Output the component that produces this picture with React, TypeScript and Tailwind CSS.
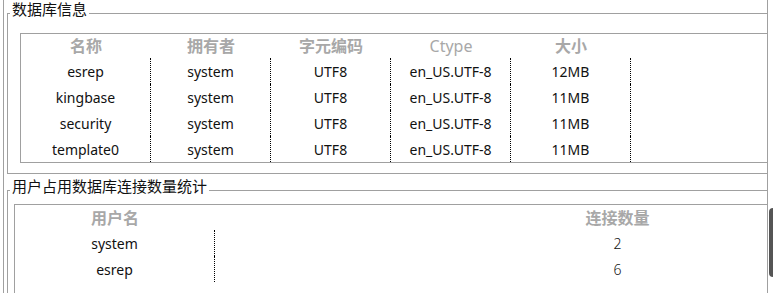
const font = { fontFamily: '"Noto Sans", "Noto Sans CJK SC", sans-serif' };

const DBS = [
  { name: "esrep", owner: "system", enc: "UTF8", ctype: "en_US.UTF-8", size: "12MB" },
  { name: "kingbase", owner: "system", enc: "UTF8", ctype: "en_US.UTF-8", size: "11MB" },
  { name: "security", owner: "system", enc: "UTF8", ctype: "en_US.UTF-8", size: "11MB" },
  { name: "template0", owner: "system", enc: "UTF8", ctype: "en_US.UTF-8", size: "11MB" },
];

const CONNS = [
  { user: "system", count: 2 },
  { user: "esrep", count: 6 },
];

const DB_COLS = [
  { key: "name", label: "名称", w: "w-[130px]", weight: "font-bold" },
  { key: "owner", label: "拥有者", w: "w-[120px]", weight: "font-bold" },
  { key: "enc", label: "字元编码", w: "w-[120px]", weight: "font-bold" },
  { key: "ctype", label: "Ctype", w: "w-[120px]", weight: "font-normal" },
  { key: "size", label: "大小", w: "w-[120px]", weight: "font-bold" },
] as const;

function Group({
  title,
  className,
  children,
}: {
  title: string;
  className: string;
  children: React.ReactNode;
}) {
  return (
    <div className={"relative ml-[3px] w-[820px] border border-[#a0a0a0] " + className}>
      <span className="absolute -top-[15px] left-[2px] bg-white px-[2px] text-[15px] leading-[20px] text-[#111]">
        {title}
      </span>
      {children}
    </div>
  );
}

export default function App() {
  return (
    <div className="relative w-[773px] h-[293px] bg-white overflow-hidden" style={font}>
      <div className="ml-[3px] w-[765px] h-full border-l border-r border-[#a0a0a0] overflow-hidden">
        <Group title="数据库信息" className="mt-[13px] h-[161px]">
          <div className="ml-[12px] mt-[19px] border border-[#a0a0a0]">
            <div className="flex h-[24px] items-center">
              {DB_COLS.map(c => (
                <div
                  key={c.key}
                  className={c.w + " " + c.weight + " shrink-0 text-center text-[16px] text-[#a8a8a8]"}
                >
                  {c.label}
                </div>
              ))}
            </div>
            {DBS.map(row => (
              <div key={row.name} className="flex h-[26px]">
                {DB_COLS.map(c => (
                  <div
                    key={c.key}
                    className={
                      c.w +
                      " shrink-0 flex items-center justify-center border-r border-dotted border-black text-[14px] text-[#111]"
                    }
                  >
                    {row[c.key]}
                  </div>
                ))}
              </div>
            ))}
          </div>
        </Group>

        <Group title="用户占用数据库连接数量统计" className="mt-[16px] h-[140px]">
          <div className="ml-[6px] mt-[13px] h-[200px] border border-[#a0a0a0]">
            <div className="flex h-[25px] items-center text-[16px] font-bold text-[#a8a8a8]">
              <div className="w-[200px] shrink-0 text-center">用户名</div>
              <div className="w-[805px] shrink-0 text-center">连接数量</div>
            </div>
            {CONNS.map(c => (
              <div key={c.user} className="flex h-[26px] text-[14px] text-[#111]">
                <div className="w-[200px] shrink-0 flex items-center justify-center border-r border-dotted border-black">
                  {c.user}
                </div>
                <div className="w-[805px] shrink-0 flex items-center justify-center font-light">
                  {c.count}
                </div>
              </div>
            ))}
          </div>
        </Group>
      </div>
      <div className="absolute right-0 top-[208px] h-[69px] w-[4px] rounded-l-sm bg-[#555]" />
    </div>
  );
}
